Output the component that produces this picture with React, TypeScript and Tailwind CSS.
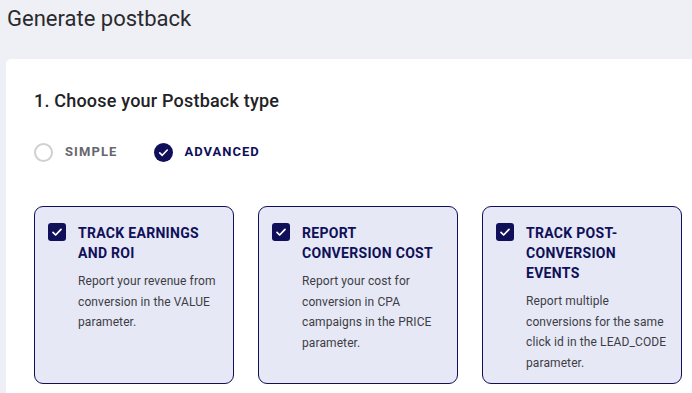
import React from 'react';

const NAVY = '#0f0f5a';

const cards = [
  { title: 'TRACK EARNINGS AND ROI', desc: 'Report your revenue from conversion in the VALUE parameter.' },
  { title: 'REPORT CONVERSION COST', desc: 'Report your cost for conversion in CPA campaigns in the PRICE parameter.' },
  { title: 'TRACK POST-CONVERSION EVENTS', desc: 'Report multiple conversions for the same click id in the LEAD_CODE parameter.' },
];

const CheckMark: React.FC<{ size: number }> = ({ size }) => (
  <svg width={size} height={size} viewBox="0 0 24 24" fill="none">
    <path d="M6 12.5l4 4 8-8.5" stroke="#fff" strokeWidth="2.6" strokeLinecap="round" strokeLinejoin="round" />
  </svg>
);

const Card: React.FC<{ title: string; desc: string }> = ({ title, desc }) => (
  <div className="w-[200px] h-[178px] shrink-0 rounded-[9px] border border-[#0f0f5a] bg-[#e6e8f5] pl-[13px] pr-[13px] pt-4 flex gap-3">
    <div className="w-[18px] h-[18px] shrink-0 rounded-[3px] bg-[#0f0f5a] flex items-center justify-center">
      <CheckMark size={16} />
    </div>
    <div className="flex flex-col">
      <div className="text-[14px] leading-[20px] font-bold tracking-[0.3px] text-[#0f0f5a]">{title}</div>
      <div className="mt-[8px] text-[12px] leading-[20.5px] tracking-[0.1px] text-[#3d3d45]">{desc}</div>
    </div>
  </div>
);

export default function App() {
  return (
    <div className="w-[692px] h-[393px] overflow-hidden bg-[#eff0f5] font-['Roboto',sans-serif]">
      <div className="pl-[7px] pt-[5px] h-[59px] text-[22px] leading-[28px] text-[#2a2a2e]">Generate postback</div>
      <div className="ml-[6px] bg-white rounded-tl-[5px] h-[334px] pl-[28px] pt-[31px]">
        <div className="text-[18px] leading-[22px] font-medium tracking-[0.2px] text-[#222226]">1. Choose your Postback type</div>
        <div className="mt-[29px] flex items-center h-[22px]">
          <div className="flex items-center gap-3">
            <div className="w-[19px] h-[19px] rounded-full border-2 border-[#d0d0d4]" />
            <span className="text-[13px] font-bold tracking-[1.1px] text-[#66666e]">SIMPLE</span>
          </div>
          <div className="flex items-center gap-3 ml-[36px]">
            <div className="w-[19px] h-[19px] rounded-full flex items-center justify-center" style={{ background: NAVY }}>
              <CheckMark size={15} />
            </div>
            <span className="text-[13px] font-bold tracking-[1px] text-[#0f0f5a]">ADVANCED</span>
          </div>
        </div>
        <div className="mt-[43px] flex gap-6">
          {cards.map((c) => <Card key={c.title} {...c} />)}
        </div>
      </div>
    </div>
  );
}
